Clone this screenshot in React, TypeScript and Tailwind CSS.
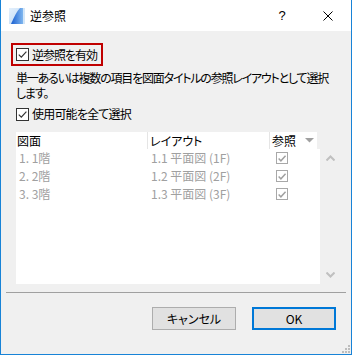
import React from "react";

// チェックボックス (Windows 10 風)
function Check({ disabled = false }: { disabled?: boolean }) {
  return (
    <span
      className={
        disabled
          ? "w-[12px] h-[12px] border border-[#a8a8a8] bg-white flex items-center justify-center shrink-0"
          : "w-[13px] h-[13px] border border-[#333333] bg-white flex items-center justify-center shrink-0"
      }
    >
      <svg width="11" height="11" viewBox="0 0 11 11">
        <path
          d="M1.8 5.6 L4.3 8.1 L9.4 2.6"
          fill="none"
          stroke={disabled ? "#a0a0a0" : "#333333"}
          strokeWidth={disabled ? 1.6 : 1.2}
        />
      </svg>
    </span>
  );
}

function AppIcon() {
  return (
    <svg width="16" height="16" viewBox="0 0 16 16">
      <defs>
        <linearGradient id="bg" x1="0" y1="0" x2="1" y2="1">
          <stop offset="0" stopColor="#e4f0fc" />
          <stop offset="1" stopColor="#b9d6f4" />
        </linearGradient>
        <linearGradient id="fg" x1="0" y1="0" x2="1" y2="0">
          <stop offset="0" stopColor="#1a5fd0" />
          <stop offset="1" stopColor="#7fb6ef" />
        </linearGradient>
      </defs>
      <rect x="0" y="0" width="16" height="16" fill="url(#bg)" />
      <path d="M2 16 C5 9 8 3 11 0 L14 0 L14 16 Z" fill="url(#fg)" />
      <rect x="14" y="0" width="2" height="16" fill="#d3e6f8" />
    </svg>
  );
}

const rows = [
  { a: "1. 1階", b: "1.1 平面図 (1F)" },
  { a: "2. 2階", b: "1.2 平面図 (2F)" },
  { a: "3. 3階", b: "1.3 平面図 (3F)" },
];

export default function App() {
  return (
    <div className="w-[352px] h-[355px] flex flex-col border-x border-b border-[#1883d7] bg-white text-black text-[12px] font-['Noto_Sans_CJK_JP',sans-serif] [font-feature-settings:'palt'] overflow-hidden whitespace-nowrap">
      {/* タイトルバー */}
      <div className="h-[31px] shrink-0 flex items-center bg-white">
        <div className="ml-[8px]">
          <AppIcon />
        </div>
        <span className="ml-[5px] text-[12px] leading-none">逆参照</span>
        <div className="ml-auto w-[46px] h-full flex items-center justify-center text-[13px] font-['Liberation_Sans',sans-serif]">
          ?
        </div>
        <div className="w-[46px] h-full flex items-center justify-center">
          <svg width="10" height="10" viewBox="0 0 10 10">
            <path d="M0.5 0.5 L9.5 9.5 M9.5 0.5 L0.5 9.5" stroke="#000" strokeWidth="1" />
          </svg>
        </div>
      </div>

      {/* 本体 */}
      <div className="flex-1 bg-[#f0f0f0] flex flex-col relative">
        <div className="pl-[10px] pt-[12px]">
          <div className="w-[92px] h-[23px] border-2 border-[#c00000] flex items-center pl-[3px]">
            <Check />
            <span className="ml-[3px] leading-none tracking-[-1px]">逆参照を有効</span>
          </div>
        </div>

        <p className="pl-[15px] mt-[4px] leading-[15px] tracking-[-1.2px]">
          単一あるいは複数の項目を図面タイトルの参照レイアウトとして選択
          <br />
          します。
        </p>

        <div className="pl-[15px] mt-[6px] h-[16px] flex items-center">
          <Check />
          <span className="ml-[3px] leading-none tracking-[-0.8px]">使用可能を全て選択</span>
        </div>

        {/* テーブル */}
        <div className="ml-[15px] mt-[10px] w-[322px] h-[152px] flex">
          <div className="w-[304px] flex flex-col">
            <div className="h-[17px] w-[301px] bg-white flex items-center">
              <div className="w-[132px] h-full pl-[1px] flex items-center border-r border-[#e5e5e5]">図面</div>
              <div className="w-[122px] h-full pl-[2px] flex items-center border-r border-[#e5e5e5]">レイアウト</div>
              <div className="flex-1 h-full pl-[2px] flex items-center">
                <span>参照</span>
                <svg className="ml-auto mr-[3px]" width="9" height="5" viewBox="0 0 9 5">
                  <path d="M0 0 L9 0 L4.5 4.5 Z" fill="#a0a0a0" />
                </svg>
              </div>
            </div>
            <div className="flex-1 bg-white text-[#a0a0a0]">
              {rows.map((r) => (
                <div key={r.a} className="h-[18px] flex items-center">
                  <div className="w-[132px] pl-[3px]">{r.a}</div>
                  <div className="w-[128px] pl-[3px]">{r.b}</div>
                  <Check disabled />
                </div>
              ))}
            </div>
          </div>
          {/* スクロールバー */}
          <div className="flex-1 pt-[23px] pb-[6px] flex flex-col items-center justify-between pl-[2px]">
            <svg width="9" height="6" viewBox="0 0 9 6">
              <path d="M0.5 5.5 L4.5 1.5 L8.5 5.5" fill="none" stroke="#c0c0c0" strokeWidth="2" />
            </svg>
            <svg width="9" height="6" viewBox="0 0 9 6">
              <path d="M0.5 0.5 L4.5 4.5 L8.5 0.5" fill="none" stroke="#c0c0c0" strokeWidth="2" />
            </svg>
          </div>
        </div>

        <div className="mx-[5px] mt-[8px] h-px bg-[#a0a0a0]" />

        <div className="mt-[14px] pr-[15px] flex justify-end gap-[16px]">
          <button className="w-[84px] h-[23px] bg-[#e1e1e1] border border-[#adadad] leading-none">
            キャンセル
          </button>
          <button className="w-[84px] h-[23px] bg-[#e1e1e1] border-2 border-[#0078d7] leading-none">
            OK
          </button>
        </div>

        {/* サイズグリップ */}
        <svg className="absolute right-[1px] bottom-[1px]" width="9" height="9" viewBox="0 0 9 9">
          <rect x="7" y="1" width="2" height="2" fill="#bdbdbd" />
          <rect x="4" y="4" width="2" height="2" fill="#bdbdbd" />
          <rect x="7" y="4" width="2" height="2" fill="#bdbdbd" />
          <rect x="1" y="7" width="2" height="2" fill="#bdbdbd" />
          <rect x="4" y="7" width="2" height="2" fill="#bdbdbd" />
          <rect x="7" y="7" width="2" height="2" fill="#bdbdbd" />
        </svg>
      </div>
    </div>
  );
}
